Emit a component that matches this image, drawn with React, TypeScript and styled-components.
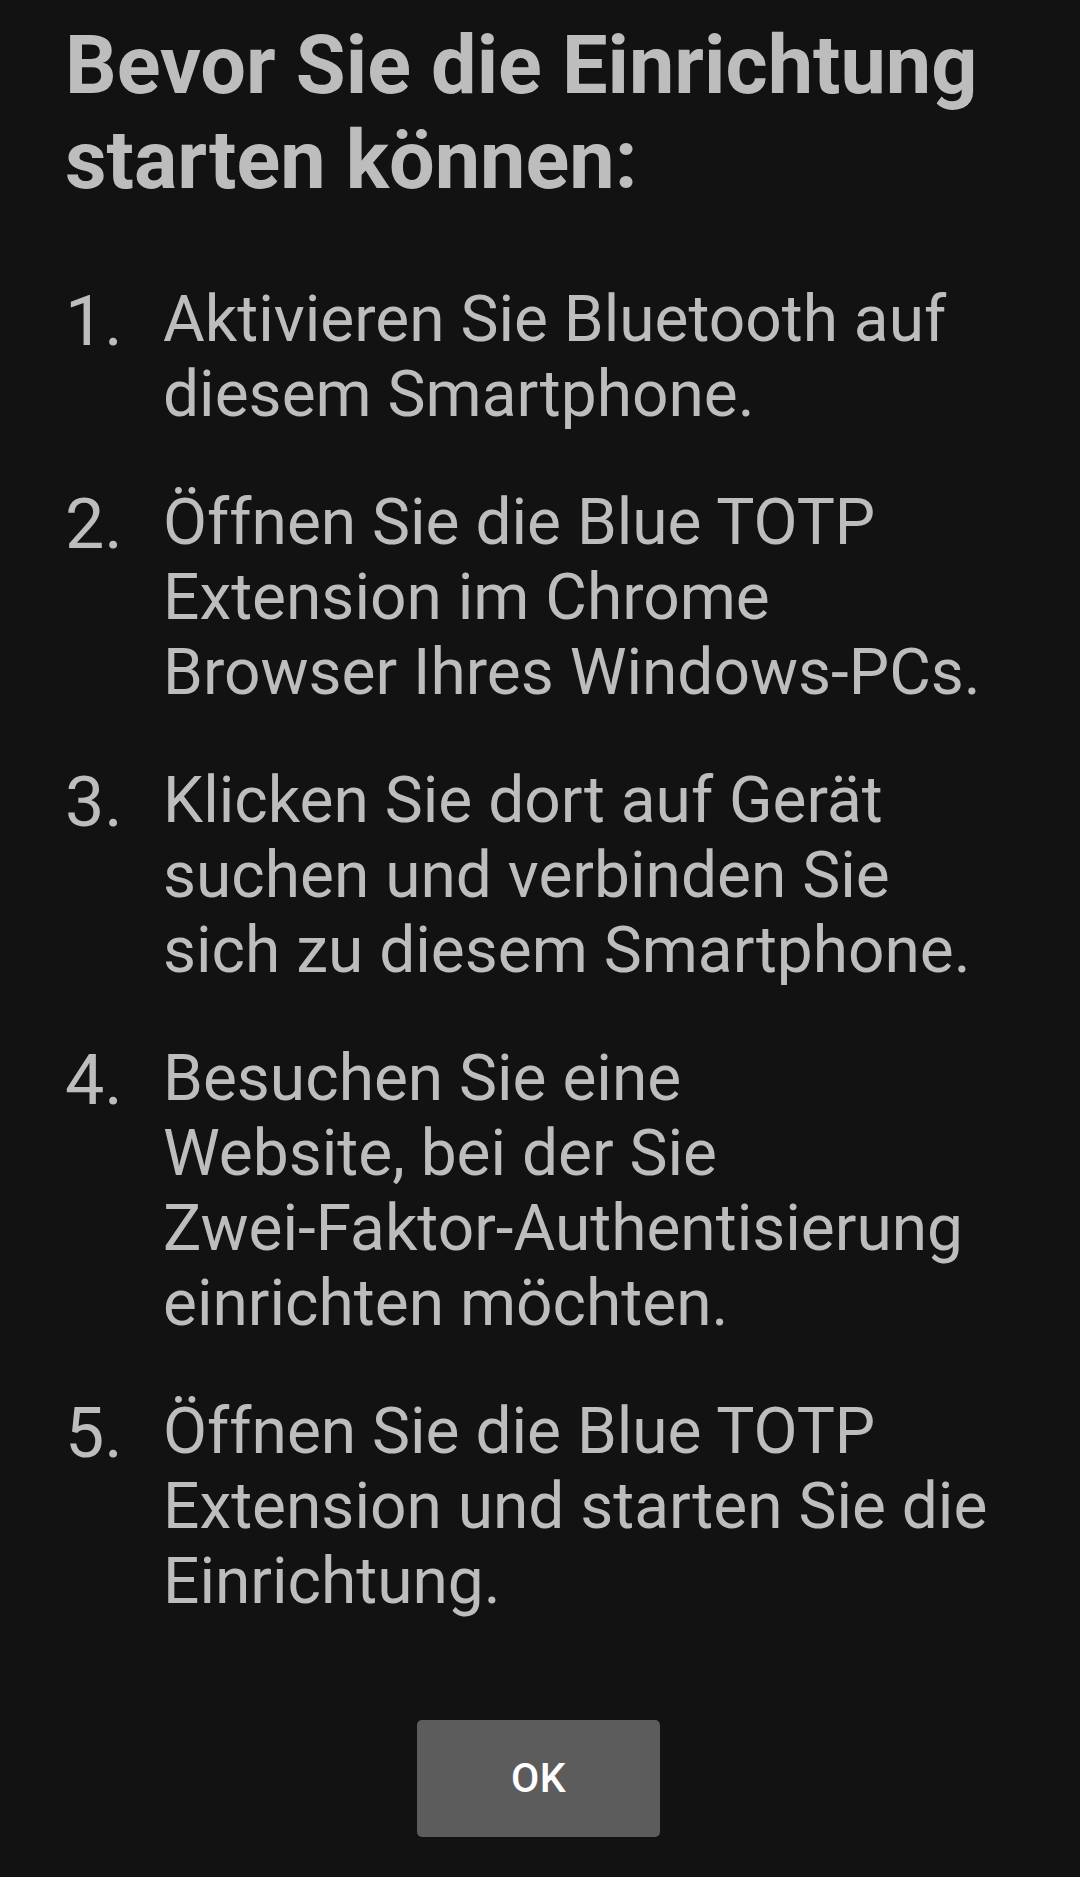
import React from "react";
import styled, { createGlobalStyle } from "styled-components";

const Global = createGlobalStyle`
  html, body {
    margin: 0;
    padding: 0;
    background: #121212;
  }
  body {
    font-family: Roboto, "Noto Sans", "Liberation Sans", sans-serif;
    -webkit-font-smoothing: antialiased;
  }
`;

const Screen = styled.div`
  width: 1080px;
  height: 1877px;
  box-sizing: border-box;
  background: #121212;
  padding: 17.5px 0 0 65px;
  display: flex;
  flex-direction: column;
  overflow: hidden;
`;

const Title = styled.h1`
  margin: 0;
  font-family: Roboto, "Noto Sans", sans-serif;
  font-weight: 700;
  font-size: 81px;
  line-height: 95px;
  color: #bdbdbd;
  white-space: nowrap;
`;

const Line = styled.span`
  display: block;
  white-space: nowrap;
`;

const Steps = styled.ol`
  list-style: none;
  margin: 74px 0 0;
  padding: 0;
  display: flex;
  flex-direction: column;
  gap: 53px;
`;

const Step = styled.li`
  display: grid;
  grid-template-columns: 98px 1fr;
  font-size: 64px;
  line-height: 75px;
  color: #bdbdbd;
  font-weight: 400;
`;

const StepNumber = styled.span`
  display: block;
  font-size: 70px;
  line-height: 75px;
  margin-top: 2px;
`;

const StepText = styled.div`
  display: flex;
  flex-direction: column;
`;

const Actions = styled.div`
  display: flex;
  justify-content: center;
  margin: 101px 0 0 -65px;
  padding-right: 3px;
`;

const Button = styled.button`
  width: 243px;
  height: 117px;
  border: none;
  border-radius: 5px;
  background: #5c5c5d;
  color: #ffffff;
  font-family: Roboto, "Noto Sans", sans-serif;
  font-weight: 500;
  font-size: 41px;
  letter-spacing: 0.5px;
  padding: 0;
  display: flex;
  align-items: center;
  justify-content: center;
  cursor: pointer;
`;

const steps: string[][] = [
  ["Aktivieren Sie Bluetooth auf", "diesem Smartphone."],
  ["Öffnen Sie die Blue TOTP", "Extension im Chrome", "Browser Ihres Windows-PCs."],
  ["Klicken Sie dort auf Gerät", "suchen und verbinden Sie", "sich zu diesem Smartphone."],
  [
    "Besuchen Sie eine",
    "Website, bei der Sie",
    "Zwei-Faktor-Authentisierung",
    "einrichten möchten.",
  ],
  ["Öffnen Sie die Blue TOTP", "Extension und starten Sie die", "Einrichtung."],
];

export default function App() {
  return (
    <>
      <Global />
      <Screen>
        <Title>
          <Line>Bevor Sie die Einrichtung</Line>
          <Line>starten können:</Line>
        </Title>
        <Steps>
          {steps.map((lines, i) => (
            <Step key={i}>
              <StepNumber>{i + 1}.</StepNumber>
              <StepText>
                {lines.map((l, j) => (
                  <Line key={j}>{l}</Line>
                ))}
              </StepText>
            </Step>
          ))}
        </Steps>
        <Actions>
          <Button>OK</Button>
        </Actions>
      </Screen>
    </>
  );
}
